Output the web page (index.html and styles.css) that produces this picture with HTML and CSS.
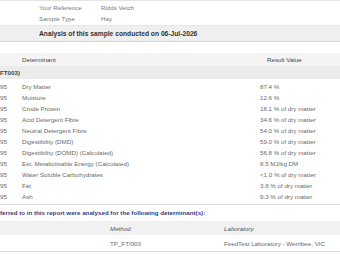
FILE: index.html
```html
<!DOCTYPE html>
<html>
<head>
<meta charset="utf-8">
<link rel="stylesheet" href="styles.css">
</head>
<body>
<div class="page">
  <div class="top-rule"></div>
  <div class="info">
    <span class="label">Your Reference</span><span class="value">Ridds Vetch</span>
    <span class="label">Sample Type</span><span class="value">Hay</span>
  </div>
  <div class="analysis-bar">Analysis of this sample conducted on 06-Jul-2026</div>

  <table class="results">
    <thead>
      <tr class="head"><th class="c-code"></th><th class="c-det">Determinant</th><th class="c-res">Result Value</th></tr>
    </thead>
    <tbody>
      <tr class="group"><td colspan="3">FT003)</td></tr>
      <tr><td class="c-code">95</td><td class="c-det">Dry Matter</td><td class="c-res">87.4 %</td></tr>
      <tr><td class="c-code">95</td><td class="c-det">Moisture</td><td class="c-res">12.6 %</td></tr>
      <tr><td class="c-code">95</td><td class="c-det">Crude Protein</td><td class="c-res">18.1 % of dry matter</td></tr>
      <tr><td class="c-code">95</td><td class="c-det">Acid Detergent Fibre</td><td class="c-res">34.6 % of dry matter</td></tr>
      <tr><td class="c-code">95</td><td class="c-det">Neutral Detergent Fibre</td><td class="c-res">54.0 % of dry matter</td></tr>
      <tr><td class="c-code">95</td><td class="c-det">Digestibility (DMD)</td><td class="c-res">59.0 % of dry matter</td></tr>
      <tr><td class="c-code">95</td><td class="c-det">Digestibility (DOMD) (Calculated)</td><td class="c-res">56.8 % of dry matter</td></tr>
      <tr><td class="c-code">95</td><td class="c-det">Est. Metabolisable Energy (Calculated)</td><td class="c-res">8.5 MJ/kg DM</td></tr>
      <tr><td class="c-code">95</td><td class="c-det">Water Soluble Carbohydrates</td><td class="c-res">&lt;1.0 % of dry matter</td></tr>
      <tr><td class="c-code">95</td><td class="c-det">Fat</td><td class="c-res">3.8 % of dry matter</td></tr>
      <tr class="last"><td class="c-code">95</td><td class="c-det">Ash</td><td class="c-res">9.3 % of dry matter</td></tr>
    </tbody>
  </table>

  <p class="note">ferred to in this report were analysed for the following determinant(s):</p>

  <table class="methods">
    <thead>
      <tr class="head"><th class="m-blank"></th><th class="m-method">Method</th><th class="m-lab">Laboratory</th></tr>
    </thead>
    <tbody>
      <tr><td class="m-blank"></td><td class="m-method">TP_FT/003</td><td class="m-lab">FeedTest Laboratory - Werribee, VIC</td></tr>
    </tbody>
  </table>
</div>
</body>
</html>
```
FILE: styles.css
```css
html, body {
  margin: 0;
  padding: 0;
  background: #ffffff;
}
body {
  width: 340px;
  height: 255px;
  overflow: hidden;
  font-family: "Liberation Sans", Arial, sans-serif;
  font-size: 6.2px;
  color: #6a6a6a;
}
.page {
  width: 340px;
}
.top-rule {
  height: 1px;
  background: #e4e4e4;
}
.info {
  display: grid;
  grid-template-columns: 62px auto;
  grid-auto-rows: 11px;
  align-items: center;
  padding: 1px 0 0 39px;
  height: 23px;
}
.info .label,
.info .value {
  color: #7a7a7a;
}
.analysis-bar {
  height: 15px;
  line-height: 15px;
  padding-left: 39px;
  background: #efefef;
  border-top: 1px solid #e6e6e6;
  border-bottom: 1px solid #d6d6d6;
  font-weight: bold;
  font-size: 6.7px;
  color: #333333;
}
table {
  border-collapse: collapse;
  table-layout: fixed;
  width: 340px;
}
.results {
  margin-top: 11px;
}
.results .head th {
  height: 13px;
  padding: 0;
  background: #f4f4f4;
  font-weight: normal;
  color: #444444;
  text-align: left;
}
.results .head .c-res {
  padding-left: 7px;
}
.results .group td {
  height: 13px;
  padding: 0;
  background: #ececec;
  font-weight: bold;
  color: #444444;
}
.results tbody tr:nth-child(2) td {
  padding-top: 2px;
}
.results td {
  height: 11px;
  padding: 0;
  vertical-align: middle;
}
.results .c-code {
  width: 22px;
}
.results .c-det {
  width: 238px;
}
.results .c-res {
  width: 80px;
}
.results tr.last td {
  height: 13px;
  vertical-align: top;
  padding-top: 0;
  border-bottom: 1px solid #dcdcdc;
  line-height: 11px;
}
.note {
  margin: 0;
  height: 16px;
  line-height: 16px;
  font-weight: bold;
  color: #3a3a7a;
}
.methods .head th {
  height: 14px;
  padding: 0;
  background: #f1f1f1;
  font-weight: normal;
  font-style: italic;
  color: #555555;
  text-align: left;
}
.methods td {
  height: 16px;
  padding: 0;
  border-bottom: 1px solid #dcdcdc;
}
.methods .m-blank {
  width: 110px;
}
.methods .m-method {
  width: 114px;
}
.methods .m-lab {
  width: 116px;
}
```
